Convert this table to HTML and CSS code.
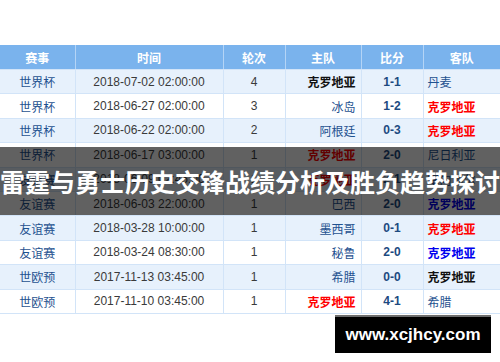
FILE: index.html
```html
<!DOCTYPE html>
<html lang="zh-CN">
<head>
<meta charset="utf-8">
<title>雷霆与勇士历史交锋战绩分析及胜负趋势探讨</title>
<link rel="stylesheet" href="styles.css">
</head>
<body>
<div class="page">
  <table class="matches">
    <colgroup>
      <col class="c-event"><col class="c-time"><col class="c-round"><col class="c-home"><col class="c-score"><col class="c-away">
    </colgroup>
    <thead>
      <tr><th>赛事</th><th>时间</th><th>轮次</th><th>主队</th><th>比分</th><th>客队</th></tr>
    </thead>
    <tbody>
      <tr><td class="ev">世界杯</td><td class="tm">2018-07-02 02:00:00</td><td class="rd">4</td><td class="home strong">克罗地亚</td><td class="sc">1-1</td><td class="away">丹麦</td></tr>
      <tr><td class="ev">世界杯</td><td class="tm">2018-06-27 02:00:00</td><td class="rd">3</td><td class="home">冰岛</td><td class="sc">1-2</td><td class="away red">克罗地亚</td></tr>
      <tr><td class="ev">世界杯</td><td class="tm">2018-06-22 02:00:00</td><td class="rd">2</td><td class="home">阿根廷</td><td class="sc">0-3</td><td class="away red">克罗地亚</td></tr>
      <tr><td class="ev">世界杯</td><td class="tm">2018-06-17 03:00:00</td><td class="rd">1</td><td class="home red">克罗地亚</td><td class="sc">2-0</td><td class="away">尼日利亚</td></tr>
      <tr><td class="ev">友谊赛</td><td class="tm">2018-06-09 02:45:00</td><td class="rd">1</td><td class="home red">克罗地亚</td><td class="sc">2-1</td><td class="away">塞内加尔</td></tr>
      <tr><td class="ev">友谊赛</td><td class="tm">2018-06-03 22:00:00</td><td class="rd">1</td><td class="home">巴西</td><td class="sc">2-0</td><td class="away navy">克罗地亚</td></tr>
      <tr><td class="ev">友谊赛</td><td class="tm">2018-03-28 10:00:00</td><td class="rd">1</td><td class="home">墨西哥</td><td class="sc">0-1</td><td class="away red">克罗地亚</td></tr>
      <tr><td class="ev">友谊赛</td><td class="tm">2018-03-24 08:30:00</td><td class="rd">1</td><td class="home">秘鲁</td><td class="sc">2-0</td><td class="away navy">克罗地亚</td></tr>
      <tr><td class="ev">世欧预</td><td class="tm">2017-11-13 03:45:00</td><td class="rd">1</td><td class="home">希腊</td><td class="sc">0-0</td><td class="away strong">克罗地亚</td></tr>
      <tr><td class="ev">世欧预</td><td class="tm">2017-11-10 03:45:00</td><td class="rd">1</td><td class="home red">克罗地亚</td><td class="sc">4-1</td><td class="away">希腊</td></tr>
    </tbody>
  </table>
  <div class="title-band"><h1 class="title">雷霆与勇士历史交锋战绩分析及胜负趋势探讨</h1></div>
  <div class="watermark">www.xcjhcy.com</div>
</div>
</body>
</html>
```

FILE: styles.css
```css
html, body {
  margin: 0;
  padding: 0;
  background: #ffffff;
}

.page {
  position: relative;
  width: 500px;
  height: 362px;
  padding-top: 45px;
  box-sizing: border-box;
  font-family: "Liberation Sans", "Noto Sans CJK SC", sans-serif;
  font-size: 12px;
  overflow: hidden;
}

.matches {
  width: 500px;
  border-collapse: collapse;
  table-layout: fixed;
}

.c-event { width: 75px; }
.c-time { width: 148px; }
.c-round { width: 62px; }
.c-home { width: 76px; }
.c-score { width: 62px; }
.c-away { width: 77px; }

.matches th {
  height: 24px;
  padding: 0;
  background: #7ab3ed;
  color: #ffffff;
  font-weight: bold;
  font-size: 12px;
  text-align: center;
  border-left: 1px solid #b4d4f6;
  border-bottom: 1px solid #d2e4f8;
}

.matches th:first-child,
.matches td:first-child {
  border-left: none;
}

.matches td {
  height: 23.4px;
  padding: 0;
  text-align: center;
  color: #333333;
  border-left: 1px solid #d2e4f8;
  border-bottom: 1px solid #d2e4f8;
  white-space: nowrap;
  overflow: hidden;
}

.matches tbody tr:nth-child(odd) td {
  background: #e7f1fc;
}

.matches tbody tr:nth-child(even) td {
  background: #ffffff;
}

.matches td.ev { color: #1f5290; }
.matches td.tm { color: #3a3a3a; }
.matches td.rd { color: #3a3a3a; }

.matches td.home {
  text-align: right;
  padding-right: 5px;
  color: #1f5290;
}

.matches td.away {
  text-align: left;
  padding-left: 4px;
  color: #1f5290;
}

.matches td.sc {
  color: #1c4a80;
  font-weight: bold;
}

.matches td.strong {
  color: #111111;
  font-weight: bold;
}

.matches td.red {
  color: #ff0000;
  font-weight: bold;
}

.matches td.navy {
  color: #0000ee;
  font-weight: bold;
}

.title-band {
  position: absolute;
  left: 0;
  top: 147px;
  width: 500px;
  height: 68px;
  background: rgba(0, 0, 0, 0.62);
  display: flex;
  align-items: center;
  justify-content: center;
}

.title {
  margin: 0;
  color: #ffffff;
  font-family: "Noto Sans CJK SC", sans-serif;
  font-size: 25px;
  font-weight: bold;
  white-space: nowrap;
  line-height: 1;
}

.watermark {
  position: absolute;
  left: 335px;
  top: 315px;
  width: 156px;
  height: 38px;
  box-sizing: border-box;
  background: #000000;
  border-top: 2px solid #6e6e6e;
  color: #ffffff;
  font-family: "Liberation Sans", sans-serif;
  font-weight: bold;
  font-size: 17px;
  display: flex;
  align-items: center;
  justify-content: center;
}
```
